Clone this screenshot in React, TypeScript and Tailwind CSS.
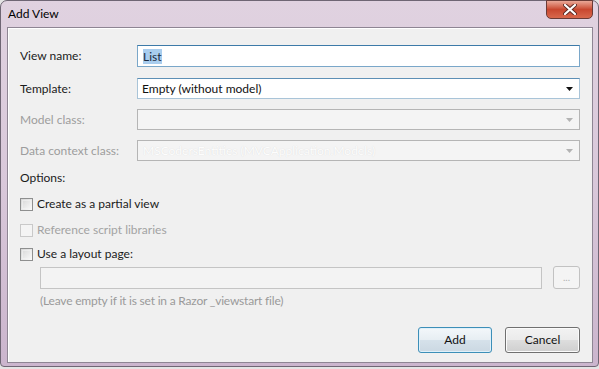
const font = { fontFamily: '"Lato", "Noto Sans", sans-serif' }

const Arrow = ({ disabled }: { disabled?: boolean }) => (
  <svg width="7" height="4" viewBox="0 0 7 4" className="shrink-0">
    <polygon points="0,0 7,0 3.5,4" fill={disabled ? '#b3b3b3' : '#111'} />
  </svg>
)

const Checkbox = ({ disabled }: { disabled?: boolean }) => (
  <div
    className={`w-[13px] h-[13px] border shrink-0 ${
      disabled ? 'border-[#c9c9c9] bg-[#f4f4f4]' : 'border-[#8e8f8f] bg-gradient-to-br from-[#d6d6d6] to-[#fbfbfb]'
    }`}
  >
    {!disabled && <div className="m-[1px] w-[9px] h-[9px] border border-[#f4f4f4]/60" />}
  </div>
)

const Row = ({ label, disabled, children, className }: { label: string; disabled?: boolean; children: React.ReactNode; className?: string }) => (
  <div className={`flex items-center ${className ?? ''}`}>
    <div className={`w-[117px] shrink-0 text-[12px] ${disabled ? 'text-[#9d9d9d]' : 'text-[#1b1b1b]'}`}>{label}</div>
    {children}
  </div>
)

export default function App() {
  return (
    <div className="w-[599px] h-[369px] bg-[#e4e4e4] overflow-hidden" style={font}>
      <div className="relative w-[599px] h-[367px] border border-[#6f6674] rounded-t-[7px] rounded-b-[4px] bg-gradient-to-b from-[#e0d2e0] via-[#d9c8da] to-[#cbb5cd] flex flex-col">
        {/* title bar */}
        <div className="h-[26px] flex items-center pl-[7px] text-[12px] text-black">Add View</div>
        <div className="absolute top-[-1px] right-[5px] w-[47px] h-[19px] rounded-b-[5px] border border-[#6a3b36] overflow-hidden bg-gradient-to-b from-[#e9a797] via-[#c8472f] to-[#d8684c] flex items-center justify-center">
          <svg width="14" height="11" viewBox="0 0 14 11">
            <path d="M2 1 L12 10 M12 1 L2 10" stroke="#5b2a24" strokeWidth="4" strokeLinecap="round" />
            <path d="M2 1 L12 10 M12 1 L2 10" stroke="#ffffff" strokeWidth="2.2" strokeLinecap="round" />
          </svg>
        </div>

        {/* client area */}
        <div className="ml-[6px] mr-[5px] mb-[3px] flex-1 border border-[#8e8593] bg-[#f0f0f0] shadow-[inset_1px_1px_0_#ffffff] px-[12px] pt-[17px] flex flex-col">
          <Row label="View name:">
            <div className="flex-1 h-[22px] border border-[#7aa7c9] border-t-[#3d7aa8] bg-white flex items-center pl-[5px]">
              <span className="bg-[#a9cdee] text-[12px] text-[#1a2a40] leading-[15px]">List</span>
            </div>
          </Row>
          <Row label="Template:" className="mt-[11px]">
            <div className="flex-1 h-[21px] border border-[#a9c4d8] border-t-[#5d8fb5] bg-white flex items-center pl-[4px] pr-[6px]">
              <span className="flex-1 text-[12px] text-[#111]">Empty (without model)</span>
              <Arrow />
            </div>
          </Row>
          <Row label="Model class:" disabled className="mt-[10px]">
            <div className="flex-1 h-[21px] border border-[#b5b5b5] bg-[#f4f4f4] flex items-center justify-end pr-[6px]">
              <Arrow disabled />
            </div>
          </Row>
          <Row label="Data context class:" disabled className="mt-[10px]">
            <div className="flex-1 h-[21px] border border-[#b5b5b5] bg-[#f4f4f4] flex items-center pl-[5px] pr-[6px]">
              <span className="flex-1 text-[12px] text-[#fdfdfd] [text-shadow:0_0_1px_#d6d6d6]">MSCodersEntities (MVCApplication.Models)</span>
              <Arrow disabled />
            </div>
          </Row>

          <div className="mt-[9px] h-[16px] text-[12px] text-[#1b1b1b] leading-[16px]">Options:</div>
          <div className="mt-[10px] h-[16px] flex items-center gap-[4px] text-[12px] text-[#1b1b1b]">
            <Checkbox />
            <span>Create as a partial view</span>
          </div>
          <div className="mt-[10px] h-[16px] flex items-center gap-[4px] text-[12px] text-[#a3a3a3]">
            <Checkbox disabled />
            <span>Reference script libraries</span>
          </div>
          <div className="mt-[8px] h-[16px] flex items-center gap-[4px] text-[12px] text-[#1b1b1b]">
            <Checkbox />
            <span>Use a layout page:</span>
          </div>
          <div className="mt-[4px] pl-[20px] flex items-center gap-[11px]">
            <div className="flex-1 h-[22px] border border-[#c4c4c4] bg-[#f3f3f3]" />
            <div className="w-[27px] h-[23px] rounded-[3px] border border-[#c2c2c2] bg-[#f4f4f4] flex items-center justify-center text-[10px] text-[#b0b0b0] leading-none pb-[2px]">...</div>
          </div>
          <div className="mt-[4px] pl-[20px] h-[16px] text-[12px] text-[#9a9a9a] leading-[16px] tracking-[-0.2px]">(Leave empty if it is set in a Razor _viewstart file)</div>

          <div className="mt-[18px] flex justify-end gap-[13px]">
            <div className="w-[74px] h-[26px] rounded-[3px] border border-[#3c8fb8] bg-[linear-gradient(#f3f7fa_0%,#e7eef3_48%,#d5e1ea_52%,#cbd8e2_100%)] shadow-[inset_0_0_0_1px_#dff0fa] flex items-center justify-center text-[12px] text-[#111]">Add</div>
            <div className="w-[75px] h-[26px] rounded-[3px] border border-[#707070] bg-[linear-gradient(#f2f2f2_0%,#ebebeb_48%,#dddddd_52%,#cfcfcf_100%)] shadow-[inset_0_0_0_1px_#fbfbfb] flex items-center justify-center text-[12px] text-[#111]">Cancel</div>
          </div>
        </div>
      </div>
    </div>
  )
}
